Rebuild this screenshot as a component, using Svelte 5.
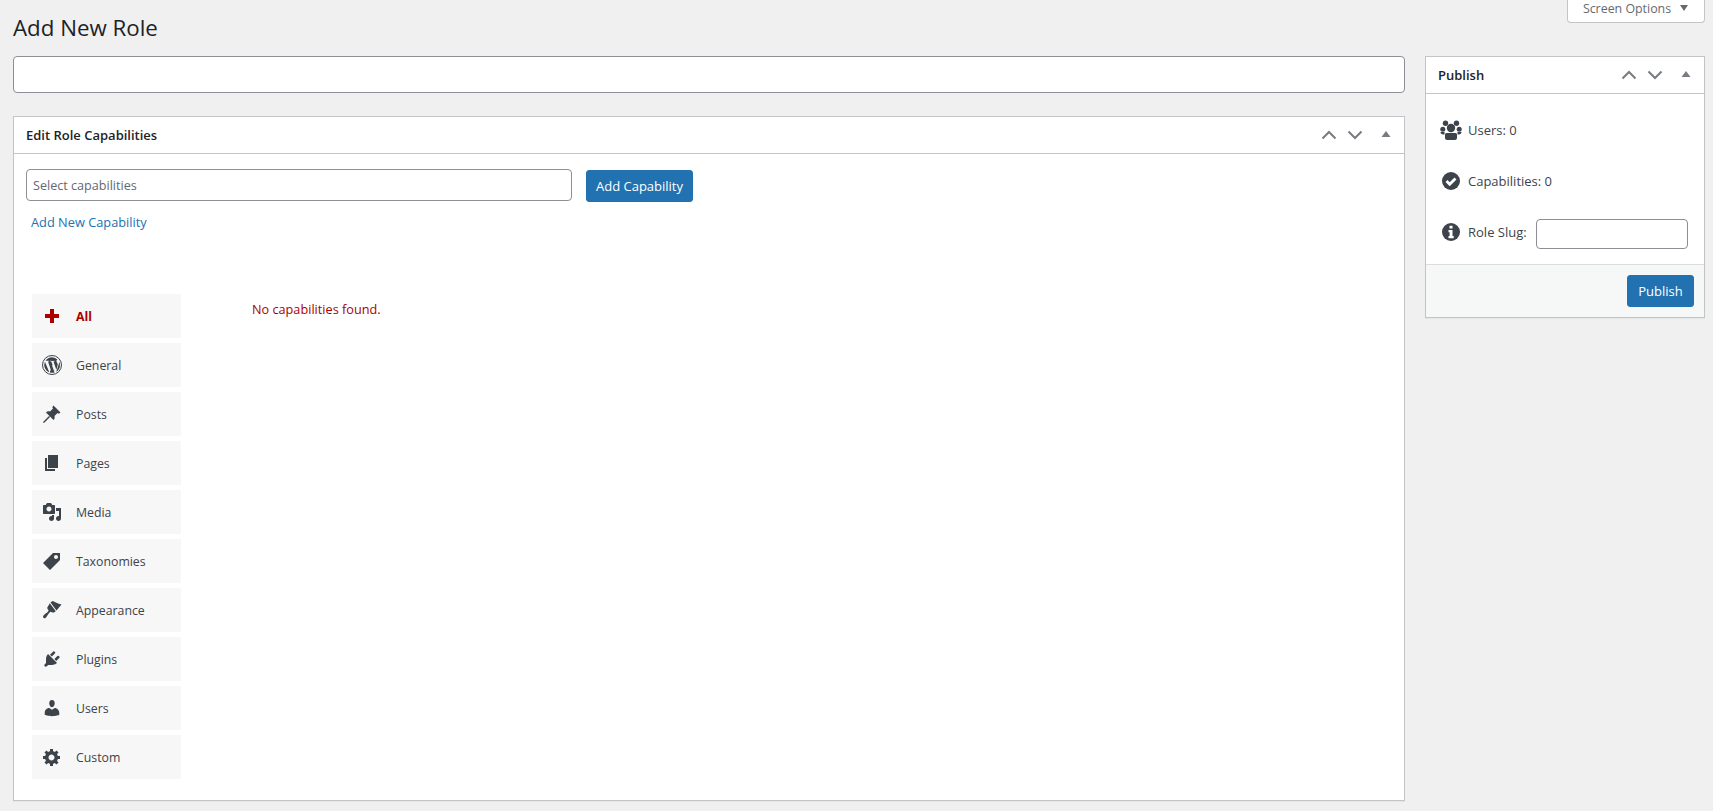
<script>
  // dashicon style paths on a 20x20 box
  const tabs = [
    { label: "All", active: true, d: "M8 3h4v5h5v4h-5v5H8v-5H3V8h5z" },
    { label: "General", wp: true },
    { label: "Posts", d: "M11.500 1.500L18.500 8.500l-1.800 1.200-1.100-.7-3.100 3c.5 1.800.1 3-1 4L4 8.500c1-1.100 2.200-1.500 4-1l3-3.100-.7-1.100zM7 12l1 1-5.500 5.500L1 19l.5-1.500z" },
    { label: "Pages", d: "M6 15V2h10v13H6zm-1 1h8v2H3V5h2v11z" },
    { label: "Media", d: "M13 11V4c0-.55-.45-1-1-1h-1.67L9 1H5L3.67 3H2c-.55 0-1 .45-1 1v7c0 .55.45 1 1 1h10c.55 0 1-.45 1-1zM7 4.5c1.38 0 2.5 1.12 2.5 2.5S8.38 9.5 7 9.5 4.5 8.38 4.5 7 5.62 4.5 7 4.5zM14 6h5v10.5c0 1.38-1.12 2.5-2.5 2.5S14 17.88 14 16.5s1.12-2.5 2.5-2.5c.17 0 .34.02.5.05V9h-3V6zm-4 8.05V13h2v3.5c0 1.38-1.12 2.5-2.5 2.5S7 17.88 7 16.5 8.12 14 9.5 14c.17 0 .34.02.5.05z" },
    { label: "Taxonomies", d: "M11 2h7v7L8 19l-7-7zm3 6c1.1 0 2-.9 2-2s-.9-2-2-2-2 .9-2 2 .9 2 2 2z" },
    { label: "Appearance", d: "M8.500 2.500L10.500 1c2.500.8 5 3 9 3.500l-5 6zM7.800 3.300l6 7.900-2 1.300c-1.300.5-2.300-1-3.300-.7-1.500.7-3 4.200-5 6.200-1.500 1-3-.5-2.300-2C3 13.500 6.500 12 6.500 10.500c0-1-1.500-1.500-1.200-3z" },
    { label: "Plugins", d: "M13.11 4.36L9.87 7.6 8 5.73l3.24-3.24c.35-.34 1.05-.2 1.56.32.52.51.66 1.21.31 1.55zm-8 1.77l.91-1.12 9.01 9.01-1.19.84c-.71.71-2.63 1.16-3.82 1.16H6.14L4.9 17.26c-.59.59-1.54.59-2.12 0-.59-.58-.59-1.53 0-2.12l1.24-1.24v-3.88c0-1.13.4-3.19 1.09-3.89zm7.26 3.97l3.24-3.24c.34-.35 1.04-.21 1.55.31.52.51.66 1.21.31 1.55l-3.24 3.25z" },
    { label: "Users", d: "M10 9.25c-2.27 0-2.73-3.44-2.73-3.44C7 4.02 7.82 2 9.97 2c2.16 0 2.98 2.02 2.71 3.81 0 0-.41 3.44-2.68 3.44zm0 2.57L12.72 10c2.39 0 4.52 2.33 4.52 4.53v2.49s-3.65 1.13-7.24 1.13c-3.65 0-7.24-1.13-7.24-1.13v-2.49c0-2.25 1.94-4.48 4.47-4.48z" },
    { label: "Custom", d: "M18 12h-2.18c-.17.7-.44 1.35-.81 1.93l1.54 1.54-2.1 2.1-1.54-1.54c-.58.36-1.23.63-1.91.79V19H8v-2.18c-.68-.16-1.33-.43-1.91-.79l-1.54 1.54-2.12-2.12 1.54-1.54c-.36-.58-.63-1.23-.79-1.91H1V9.03h2.17c.16-.7.44-1.35.8-1.94L2.43 5.55l2.1-2.1 1.54 1.54c.58-.37 1.24-.64 1.93-.81V2h3v2.18c.68.16 1.33.43 1.91.79l1.54-1.54 2.12 2.12-1.54 1.54c.36.59.64 1.24.8 1.94H18V12zm-8.5 1.5c1.66 0 3-1.34 3-3s-1.34-3-3-3-3 1.34-3 3 1.34 3 3 3z" }
  ]
</script>

{#snippet handles()}
  <div class="handles">
    <svg class="chev" width="16" height="10" viewBox="0 0 16 10"><path d="M1.5 8.5L8 2l6.5 6.5" /></svg>
    <svg class="chev" width="16" height="10" viewBox="0 0 16 10"><path d="M1.500 1.500L8 8l6.500-6.500" /></svg>
    <svg class="tri" width="10" height="6" viewBox="0 0 10 6"><path d="M5 0l4.500 6h-9z" /></svg>
  </div>
{/snippet}

<div class="page">
  <div class="screen-row">
    <button class="screen-options">
      Screen Options
      <svg width="10" height="6" viewBox="0 0 10 6"><path d="M1 0h8L5 6z" /></svg>
    </button>
  </div>

  <h1>Add New Role</h1>

  <div class="columns">
    <main>
      <input class="role-title" type="text" />

      <section class="box editor">
        <header>
          <h2>Edit Role Capabilities</h2>
          {@render handles()}
        </header>
        <div class="editor-body">
          <div class="add-row">
            <input class="cap-select" type="text" placeholder="Select capabilities" />
            <button class="primary">Add Capability</button>
          </div>
          <a class="new-cap" href="#new">Add New Capability</a>

          <div class="caps">
            <ul class="tabs">
              {#each tabs as tab}
                <li class:active={tab.active}>
                  {#if tab.wp}
                    <svg class="wp" width="22" height="22" viewBox="0 0 22 22">
                      <circle cx="11" cy="11" r="9.500" />
                      <path d="M11 3.200a7.800 7.800 0 0 0-6.500 3.500h1.700l1.700.100c.4 0 .4.600 0 .600l-.9.100 2.800 8.300 1.700-5-1.200-3.300-.8-.100c-.4 0-.4-.6 0-.6l1.900.1 1.900-.1c.4 0 .5.600 0 .6l-.8.100 2.800 8.200.8-2.500c.3-1 .6-1.800.6-2.400 0-1-.3-1.600-.6-2.100-.4-.6-.7-1.100-.7-1.700 0-.7.500-1.300 1.200-1.300h.1A7.800 7.800 0 0 0 11 3.200zM3.900 7.800a7.800 7.800 0 0 0 4.400 10.500zM11.100 11.700l-2.300 6.800a7.800 7.800 0 0 0 4.800-.1zM18 7.300c.1.300.1.600.1 1 0 .8-.2 1.700-.6 2.900l-2.400 6.800A7.800 7.800 0 0 0 18 7.300z" />
                    </svg>
                  {:else}
                    <svg class="glyph" width="20" height="20" viewBox="0 0 20 20"><path d={tab.d} /></svg>
                  {/if}
                  <span>{tab.label}</span>
                </li>
              {/each}
            </ul>
            <p class="empty">No capabilities found.</p>
          </div>
        </div>
      </section>
    </main>

    <aside class="box publish">
      <header>
        <h2>Publish</h2>
        {@render handles()}
      </header>
      <div class="stats">
        <div class="stat">
          <svg class="stat-icon" width="22" height="20" viewBox="0 0 22 20">
            <circle cx="5.500" cy="3.200" r="2.700" />
            <circle cx="16.500" cy="3.200" r="2.700" />
            <circle cx="2.800" cy="9.200" r="2.500" />
            <circle cx="19.200" cy="9.200" r="2.500" />
            <path d="M.500 12h4v2.500H3.200C1.500 14.500.500 13.500.500 12zM21.500 12h-4v2.500h1.300c1.700 0 2.700-1 2.700-2.500z" />
            <circle cx="11" cy="8" r="4.200" />
            <path d="M6.500 13h9c.9 0 1.500.8 1.500 1.700V18c0 1.300-1 2-2 2H7c-1 0-2-.7-2-2v-3.300C5 13.800 5.600 13 6.500 13z" />
          </svg>
          <span>Users: 0</span>
        </div>
        <div class="stat">
          <svg class="stat-icon" width="22" height="20" viewBox="0 0 22 20">
            <circle cx="11" cy="10" r="9" />
            <path class="knock" d="M6.500 10l3.200 3.200 5.800-5.800" />
          </svg>
          <span>Capabilities: 0</span>
        </div>
        <div class="stat">
          <svg class="stat-icon" width="22" height="20" viewBox="0 0 22 20">
            <circle cx="11" cy="10" r="9" />
            <path class="white" d="M9.500 3.700h3v2.800h-3zM8.500 8h4v6h1.200v2.200H8.500V14h1.100v-3.800H8.500z" />
          </svg>
          <span class="nowrap">Role Slug:</span>
          <input class="slug" type="text" />
        </div>
      </div>
      <footer>
        <button class="primary">Publish</button>
      </footer>
    </aside>
  </div>
</div>

<style>
  :global(body) {
    background: #f0f0f1;
    color: #3c434a;
    font-family: "Open Sans", "Noto Sans", sans-serif;
    font-size: 13px;
  }

  .page {
    position: relative;
    height: 811px;
    box-sizing: border-box;
    padding: 0 8px 0 13px;
    overflow: hidden;
  }

  .screen-row {
    position: absolute;
    top: 0;
    right: 8px;
  }

  .screen-options {
    box-sizing: border-box;
    display: flex;
    align-items: center;
    justify-content: center;
    gap: 8px;
    width: 138px;
    height: 23px;
    padding: 0 0 6px;
    background: #fff;
    border: 1px solid #c3c4c7;
    border-top: 0;
    border-radius: 0 0 4px 4px;
    color: #646970;
    font: inherit;
    font-size: 12.4px;
  }

  .screen-options svg {
    fill: #646970;
  }

  h1 {
    margin: 0;
    padding-top: 13px;
    height: 56px;
    box-sizing: border-box;
    font-size: 22.3px;
    line-height: 30px;
    font-weight: 400;
    color: #1d2327;
  }

  .columns {
    display: grid;
    grid-template-columns: 1392px 280px;
    gap: 20px;
    align-items: start;
  }

  input {
    box-sizing: border-box;
    background: #fff;
    border: 1px solid #8c8f94;
    border-radius: 4px;
    font: inherit;
    margin: 0;
    outline: none;
  }

  .role-title {
    display: block;
    width: 100%;
    height: 37px;
  }

  .box {
    box-sizing: border-box;
    background: #fff;
    border: 1px solid #c3c4c7;
    box-shadow: 0 1px 1px rgba(0, 0, 0, 0.04);
  }

  .box header {
    display: flex;
    align-items: center;
    justify-content: space-between;
    height: 37px;
    box-sizing: border-box;
    padding-left: 12px;
    border-bottom: 1px solid #c3c4c7;
  }

  h2 {
    margin: 0;
    font-size: 13px;
    font-weight: 600;
    color: #1d2327;
  }

  .handles {
    display: flex;
    align-items: center;
    gap: 10px;
    padding-right: 13px;
    margin-top: -1px;
  }

  .chev {
    fill: none;
    stroke: #787c82;
    stroke-width: 2;
  }

  .tri {
    fill: #787c82;
    margin-left: 8px;
    margin-top: -2px;
  }

  .editor {
    margin-top: 23px;
    height: 685px;
  }

  .editor-body {
    padding: 15px 13px 0 12px;
  }

  .add-row {
    display: flex;
    align-items: flex-start;
    gap: 14px;
  }

  .cap-select {
    width: 546px;
    height: 32px;
    padding: 0 6px;
    font-size: 12.6px;
  }

  .cap-select::placeholder {
    color: #646970;
  }

  .primary {
    box-sizing: border-box;
    height: 32px;
    padding: 0;
    width: 107px;
    margin-top: 1px;
    background: #2271b1;
    border: 1px solid #2271b1;
    border-radius: 3px;
    color: #fff;
    font: inherit;
  }

  .new-cap {
    display: block;
    margin: 10px 0 0 5px;
    line-height: 20px;
    color: #2271b1;
    text-decoration: none;
    font-size: 12.8px;
  }

  .caps {
    display: flex;
    margin-top: 62px;
    padding-left: 6px;
  }

  .tabs {
    list-style: none;
    margin: 0;
    padding: 0;
    width: 149px;
    display: flex;
    flex-direction: column;
    gap: 5px;
    font-size: 12.3px;
  }

  .tabs li {
    display: flex;
    align-items: center;
    gap: 14px;
    height: 44px;
    padding-left: 10px;
    background: #f7f7f7;
  }

  .tabs li .glyph {
    fill: #3c434a;
  }

  .tabs li.active {
    color: #a00;
    font-weight: 700;
  }

  .tabs li.active .glyph {
    fill: #a00;
  }

  .wp {
    margin-left: -1px;
    margin-right: -1px;
    fill: #3c434a;
  }

  .wp circle {
    fill: none;
    stroke: #3c434a;
    stroke-width: 1;
  }

  .empty {
    margin: 5px 0 0 71px;
    line-height: 20px;
    color: #a00;
    font-size: 12.7px;
  }

  .publish {
    height: 262px;
    display: flex;
    flex-direction: column;
  }

  .stats {
    flex: 1;
    padding: 21px 16px 0 14px;
    display: flex;
    flex-direction: column;
    gap: 21px;
  }

  .stat {
    display: flex;
    align-items: center;
    height: 30px;
    gap: 6px;
  }

  .stat-icon {
    fill: #3c434a;
  }

  .nowrap {
    white-space: nowrap;
  }

  .knock {
    fill: none;
    stroke: #fff;
    stroke-width: 2.800;
  }

  .white {
    fill: #fff;
  }

  .slug {
    width: 152px;
    height: 30px;
    margin-left: auto;
    margin-top: 4px;
  }

  footer {
    display: flex;
    justify-content: flex-end;
    height: 53px;
    box-sizing: border-box;
    padding: 10px 10px 0 0;
    background: #f6f7f7;
    border-top: 1px solid #dcdcde;
  }

  footer .primary {
    margin: 0;
    width: 67px;
  }
</style>
